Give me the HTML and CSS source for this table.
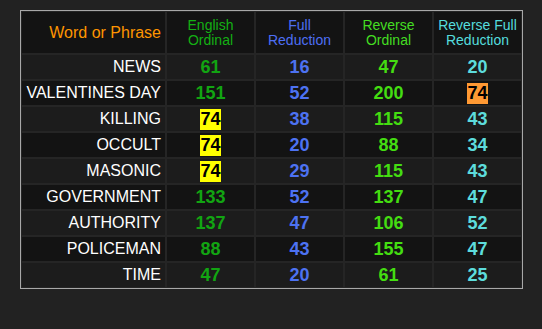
FILE: index.html
```html
<!DOCTYPE html>
<html>
<head>
<meta charset="utf-8">
<link rel="stylesheet" href="styles.css">
</head>
<body>
<div class="table">
  <div class="cell head word">Word or Phrase</div>
  <div class="cell head eo">English<br>Ordinal</div>
  <div class="cell head fr">Full<br>Reduction</div>
  <div class="cell head ro">Reverse<br>Ordinal</div>
  <div class="cell head rfr">Reverse Full<br>Reduction</div>

  <div class="cell odd word">NEWS</div>
  <div class="cell odd num eo">61</div>
  <div class="cell odd num fr">16</div>
  <div class="cell odd num ro">47</div>
  <div class="cell odd num rfr">20</div>

  <div class="cell even word">VALENTINES DAY</div>
  <div class="cell even num eo">151</div>
  <div class="cell even num fr">52</div>
  <div class="cell even num ro">200</div>
  <div class="cell even num rfr"><span class="hl-orange">74</span></div>

  <div class="cell odd word">KILLING</div>
  <div class="cell odd num eo"><span class="hl-yellow">74</span></div>
  <div class="cell odd num fr">38</div>
  <div class="cell odd num ro">115</div>
  <div class="cell odd num rfr">43</div>

  <div class="cell even word">OCCULT</div>
  <div class="cell even num eo"><span class="hl-yellow">74</span></div>
  <div class="cell even num fr">20</div>
  <div class="cell even num ro">88</div>
  <div class="cell even num rfr">34</div>

  <div class="cell odd word">MASONIC</div>
  <div class="cell odd num eo"><span class="hl-yellow">74</span></div>
  <div class="cell odd num fr">29</div>
  <div class="cell odd num ro">115</div>
  <div class="cell odd num rfr">43</div>

  <div class="cell even word">GOVERNMENT</div>
  <div class="cell even num eo">133</div>
  <div class="cell even num fr">52</div>
  <div class="cell even num ro">137</div>
  <div class="cell even num rfr">47</div>

  <div class="cell odd word">AUTHORITY</div>
  <div class="cell odd num eo">137</div>
  <div class="cell odd num fr">47</div>
  <div class="cell odd num ro">106</div>
  <div class="cell odd num rfr">52</div>

  <div class="cell even word">POLICEMAN</div>
  <div class="cell even num eo">88</div>
  <div class="cell even num fr">43</div>
  <div class="cell even num ro">155</div>
  <div class="cell even num rfr">47</div>

  <div class="cell odd word">TIME</div>
  <div class="cell odd num eo">47</div>
  <div class="cell odd num fr">20</div>
  <div class="cell odd num ro">61</div>
  <div class="cell odd num rfr">25</div>
</div>
</body>
</html>
```

FILE: styles.css
```css
html, body {
  margin: 0;
  padding: 0;
  background: #222222;
}

body {
  padding: 10px 0 0 20px;
  font-family: "Liberation Sans", Arial, sans-serif;
}

.table {
  display: grid;
  width: max-content;
  grid-template-columns: 143px 87px 87px 87px 87px;
  grid-template-rows: 41px repeat(9, 24px);
  gap: 2px;
  padding: 1px;
  border: 1px solid #a8a8a8;
  background: #252525;
}

.cell {
  display: flex;
  align-items: center;
  justify-content: center;
  text-align: center;
}

.head {
  background: #131313;
  font-size: 14px;
  line-height: 15px;
}

.odd {
  background: #1c1c1c;
}

.even {
  background: #131313;
}

.word {
  justify-content: flex-end;
  text-align: right;
  padding-right: 4px;
  font-size: 16px;
  color: #ffffff;
}

.head.word {
  font-size: 16px;
  color: #ff9500;
}

.num {
  font-size: 18px;
  font-weight: bold;
}

.head.eo { color: #14b014; }
.head.fr { color: #4e6ff5; }
.head.ro { color: #44dd22; }
.head.rfr { color: #55dddd; }

.num.eo { color: #12a412; }
.num.fr { color: #4d72f2; }
.num.ro { color: #44dd11; }
.num.rfr { color: #5ddcdc; }

.hl-yellow,
.hl-orange {
  color: #000000;
  padding: 0 0.5px;
}

.hl-yellow { background: #ffff00; }
.hl-orange { background: #ff9933; }
```
